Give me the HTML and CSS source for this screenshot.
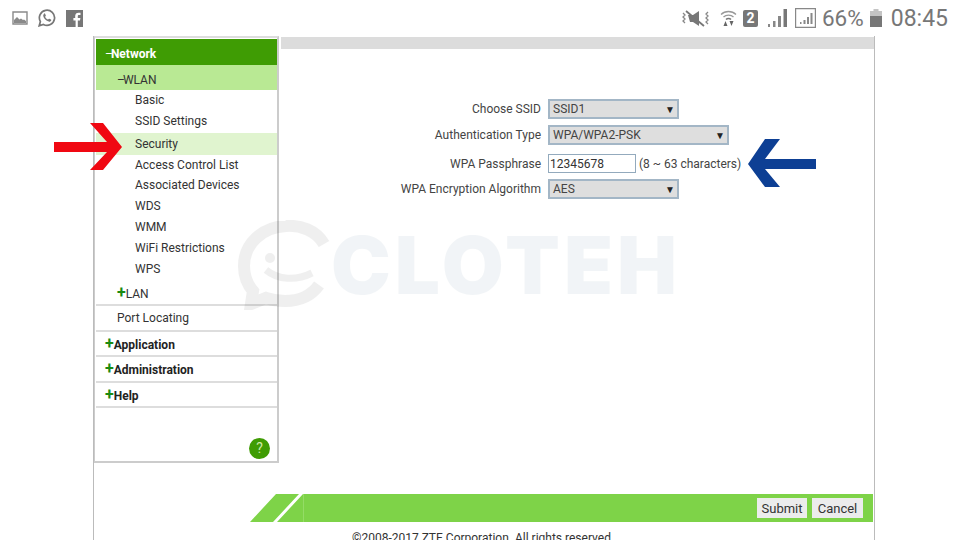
FILE: index.html
```html
<!DOCTYPE html>
<html lang="en">
<head>
    <meta charset="UTF-8">
    <title>ZTE Router - WLAN Security</title>
    <link rel="stylesheet" href="styles.css">
</head>
<body>
    <div class="status-bar">
        <div class="status-left">
            <svg class="icon-picture" width="16" height="14" viewBox="0 0 16 14"><path fill="none" stroke="#8a8a8a" stroke-width="1.4" d="M1 1h14v12H1z"/><path fill="#8a8a8a" d="M2 12V9l3-3 2.500 2.500L9 7.500l2 1.500 1-.5 2 1.500v2z"/></svg>
            <svg class="icon-whatsapp" width="18" height="18" viewBox="0 0 18 18"><path fill="none" stroke="#777" stroke-width="1.700" d="M1.200 16.800l1.200-4.200a7.600 7.600 0 1 1 3 2.900z"/><path fill="#777" d="M6.300 4.800c-.6.300-1.300 1.200-1 2.500.5 2.300 3 4.800 5.400 5.300 1.300.2 2.200-.5 2.500-1.200.1-.4 0-.7-.3-.9l-1.500-.8c-.3-.1-.5 0-.7.200l-.6.700c-1.300-.5-2.400-1.600-3-2.900l.6-.6c.2-.2.200-.4.100-.7l-.7-1.700c-.2-.4-.5-.4-.8-.3z"/></svg>
            <svg class="icon-facebook" width="17" height="17" viewBox="0 0 17 17"><path fill="#777" d="M0 0h17v17h-5.200v-6.500h2.200l.4-2.600h-2.600V6.300c0-.8.300-1.200 1.300-1.200h1.400V2.800c-.4-.1-1.200-.1-2-.1-2 0-3.300 1.200-3.300 3.400v1.800H7.400v2.600h2.200V17H0z"/></svg>
        </div>
        <div class="status-right">
            <svg class="icon-mute" width="28" height="17" viewBox="0 0 28 17"><path fill="#777" d="M6 5l5 0 6-4v15l-6-4H8z"/><path fill="none" stroke="#777" stroke-width="1.800" d="M4 1l18 15"/><path fill="none" stroke="#888" stroke-width="1.300" d="M1 3l2 2-2 2 2 2-2 2 2 2M26 2l-2 2 2 2-2 2 2 2-2 2 2 2"/></svg>
            <svg class="icon-wifi" width="17" height="18" viewBox="0 0 17 18"><g fill="none" stroke="#999" stroke-width="1.300"><path d="M1 5.500c4-4 11-4 15 0"/><path d="M3.500 8c2.500-2.500 7.500-2.500 10 0"/></g><path fill="none" stroke="#777" stroke-width="1.600" d="M6 10.500c1.300-1.200 3.700-1.200 5 0"/><path fill="#666" d="M3.500 17l2-5 2 5zM9.500 12l2 5 2-5z"/></svg>
            <span class="sim-badge">2</span>
            <svg class="icon-signal" width="19" height="18" viewBox="0 0 19 18"><path fill="#888" d="M0 15h2v3H0zM5 12h2.500v6H5zM10 7h3v11h-3z"/><path fill="#777" d="M15.500 0H19v18h-3.500z"/></svg>
            <svg class="icon-signal-box" width="21" height="20" viewBox="0 0 21 20"><path fill="none" stroke="#888" stroke-width="1.200" d="M.6.600h19.800v18.800H.6z"/><path fill="#888" d="M5 14h1.500v2H5zM8.500 12h2v4h-2zM12 9h2v7h-2zM15.500 5h2v11h-2z"/></svg>
            <span class="battery-pct">66%</span>
            <svg class="icon-battery" width="12" height="18" viewBox="0 0 12 18"><path fill="#c4c4c4" d="M3.500 0h5v2H12v5H0V2h3.500z"/><path fill="#777" d="M0 7h12v11H0z"/></svg>
            <span class="clock">08:45</span>
        </div>
    </div>

    <div class="page">
        <div class="sidebar">
            <div class="menu-title open"><span class="sign">–</span>Network</div>
            <div class="menu-sub open"><span class="sign">–</span>WLAN</div>
            <ul class="menu-items">
                <li>Basic</li>
                <li class="tall">SSID Settings</li>
                <li class="selected">Security</li>
                <li class="short">Access Control List</li>
                <li>Associated Devices</li>
                <li>WDS</li>
                <li>WMM</li>
                <li>WiFi Restrictions</li>
                <li>WPS</li>
            </ul>
            <div class="menu-sub closed"><span class="plus">+</span>LAN</div>
            <div class="menu-sub plain">Port Locating</div>
            <div class="menu-title closed"><span class="plus">+</span>Application</div>
            <div class="menu-title closed"><span class="plus">+</span>Administration</div>
            <div class="menu-title closed"><span class="plus">+</span>Help</div>
            <div class="help-wrap"><span class="help-btn">?</span></div>
        </div>

        <div class="content">
            <div class="content-head"></div>
            <div class="form">
                <div class="form-row row-ssid">
                    <label>Choose SSID</label>
                    <div class="select narrow"><span>SSID1</span><span class="caret">▼</span></div>
                </div>
                <div class="form-row row-auth">
                    <label>Authentication Type</label>
                    <div class="select wide"><span>WPA/WPA2-PSK</span><span class="caret">▼</span></div>
                </div>
                <div class="form-row row-pass">
                    <label>WPA Passphrase</label>
                    <input class="text-input" type="text" value="12345678">
                    <span class="hint">(8 ~ 63 characters)</span>
                </div>
                <div class="form-row row-algo">
                    <label>WPA Encryption Algorithm</label>
                    <div class="select narrow"><span>AES</span><span class="caret">▼</span></div>
                </div>
            </div>
        </div>

        <div class="action-bar">
            <svg class="bar-slant" width="53" height="28" viewBox="0 0 53 28"><path fill="#7ed348" d="M0 28L26 0h23L23 28zM27 28L53 0v28z"/></svg>
            <div class="bar-fill">
                <button class="btn">Submit</button>
                <button class="btn btn-cancel">Cancel</button>
            </div>
        </div>
        <div class="copyright">©2008-2017 ZTE Corporation. All rights reserved</div>
    </div>

    <!-- overlays on top of the screenshot -->
    <svg class="arrow-red" width="69" height="47" viewBox="0 0 69 47"><path fill="#f00812" d="M37 0h13l19 24-19 23H37l17-18H1V19h53z"/></svg>
    <svg class="arrow-blue" width="68" height="48" viewBox="0 0 68 48"><path fill="#0d3f94" d="M17 0h15L17 20h51v10H17l15 18H17L0 25z"/></svg>
    <div class="watermark">
        <svg width="92" height="90" viewBox="0 0 92 90"><path fill="none" stroke="#000" stroke-width="12" d="M86 24C78 10 62 5 48 6 24 7 6 24 6 46c0 10 3 18 9 25l-2 13 15-6c6 2 12 3 19 3 14 0 26-5 34-16"/><circle cx="32" cy="38" r="5"/><path fill="none" stroke="#000" stroke-width="7" d="M28 50c12 10 30 11 46 3"/></svg>
        <span class="watermark-text">CLOTEH</span>
    </div>
</body>
</html>
```

FILE: styles.css
```css
* {
    margin: 0;
    padding: 0;
    box-sizing: border-box;
}

body {
    width: 960px;
    height: 540px;
    overflow: hidden;
    position: relative;
    background: white;
    font-family: Roboto, 'Liberation Sans', sans-serif;
    font-size: 12px;
    color: #333;
}

.status-bar {
    height: 36px;
    display: flex;
    justify-content: space-between;
    align-items: center;
    padding: 0 12px;
    color: #777;
}

.status-left {
    display: flex;
    align-items: center;
    gap: 10px;
}

.status-right {
    display: flex;
    align-items: center;
}

.icon-mute {
    margin-right: 10px;
}

.icon-wifi {
    margin-right: 6px;
}

.sim-badge {
    width: 15px;
    height: 17px;
    margin-right: 10px;
    background: #777;
    border-radius: 2px;
    color: white;
    font-size: 14px;
    font-weight: 700;
    line-height: 17px;
    text-align: center;
}

.icon-signal {
    margin-right: 8px;
}

.icon-signal-box {
    margin-right: 6px;
}

.battery-pct {
    font-size: 22.500px;
    margin-right: 6px;
}

.icon-battery {
    margin-right: 9px;
}

.clock {
    font-size: 23px;
}

.page {
    position: relative;
    width: 782px;
    height: 504px;
    margin-left: 93px;
    border-left: 1px solid #bbb;
    border-right: 1px solid #bbb;
    display: flex;
    align-items: flex-start;
}

.sidebar {
    width: 185px;
    height: 427px;
    padding: 1px 0 0 1px;
    border: 1px solid #ccc;
    border-width: 0 2px 2px 1px;
    border-top: 2px solid #ddd;
    display: flex;
    flex-direction: column;
}

.menu-title {
    height: 26px;
    padding-left: 9px;
    font-weight: 700;
    line-height: 31px;
}

.menu-title.open {
    background: #3f9c04;
    color: white;
}

.menu-title.closed {
    height: 25.500px;
    border-bottom: 2px solid #ddd;
    color: #222;
    line-height: 27px;
}

.sign {
    font-weight: 400;
    letter-spacing: -2px;
}

.plus {
    color: #1a8a12;
    font-size: 16px;
    font-weight: 700;
    line-height: 1;
}

.menu-sub {
    height: 25px;
    padding-left: 21px;
    line-height: 31px;
}

.menu-sub.open {
    background: #b9e994;
}

.menu-sub.closed {
    height: 26px;
    border-bottom: 2px solid #ddd;
    line-height: 28px;
}

.menu-sub.plain {
    height: 25.500px;
    border-bottom: 2px solid #ddd;
    line-height: 25px;
}

.menu-items {
    list-style: none;
}

.menu-items li {
    height: 21px;
    padding-left: 39px;
    line-height: 21px;
}

.menu-items li.tall {
    height: 22px;
}

.menu-items li.short {
    height: 20px;
}

.menu-items li.selected {
    height: 22px;
    background: #e0f4cf;
    line-height: 22px;
}

.help-wrap {
    flex: 1;
    display: flex;
    justify-content: flex-end;
    align-items: flex-end;
    padding: 0 7px 4px 0;
}

.help-btn {
    width: 21px;
    height: 21px;
    margin-bottom: -2px;
    border-radius: 50%;
    background: #3f9c04;
    color: #cfe9a8;
    font-size: 14px;
    line-height: 21px;
    text-align: center;
}

.content {
    flex: 1;
    padding: 1px 0 0 2px;
}

.content-head {
    height: 12px;
    background: #dcdcdc;
}

.form {
    padding-top: 50px;
}

.form-row {
    display: flex;
    align-items: center;
    color: #444;
}

.form-row label {
    width: 260px;
    margin-right: 7px;
    text-align: right;
}

.row-auth {
    margin-top: 6px;
}

.row-pass {
    margin-top: 9px;
}

.row-algo {
    margin-top: 6px;
}

.select {
    height: 20px;
    padding: 0 2px 0 3px;
    display: flex;
    justify-content: space-between;
    align-items: center;
    background: #dedede;
    border: 2px solid #a3b6c6;
}

.select.narrow {
    width: 131px;
}

.select.wide {
    width: 181px;
}

.caret {
    color: #222;
    font-size: 10px;
}

.text-input {
    width: 88px;
    height: 19px;
    padding-left: 1px;
    border: 1px solid #93aabd;
    font-family: Roboto, 'Liberation Sans', sans-serif;
    font-size: 12px;
    color: #333;
}

.hint {
    margin-left: 3px;
}

.action-bar {
    position: absolute;
    left: 156px;
    top: 458px;
    width: 623px;
    height: 28px;
    display: flex;
}

.bar-slant {
    flex: none;
}

.bar-fill {
    flex: 1;
    display: flex;
    justify-content: flex-end;
    align-items: center;
    gap: 5px;
    padding-right: 10px;
    background: #7ed348;
    border-left: 1px solid #94dc66;
}

.btn {
    width: 50px;
    height: 20px;
    border: none;
    background: #ececec;
    font-family: Roboto, 'Liberation Sans', sans-serif;
    font-size: 13px;
    color: #333;
}

.btn-cancel {
    width: 51px;
}

.copyright {
    position: absolute;
    left: 258px;
    top: 495px;
    color: #333;
}

.arrow-red {
    position: absolute;
    left: 53px;
    top: 123px;
}

.arrow-blue {
    position: absolute;
    left: 748px;
    top: 139px;
}

.watermark {
    position: absolute;
    left: 238px;
    top: 216px;
    display: flex;
    align-items: center;
    gap: 1px;
    opacity: 0.06;
    pointer-events: none;
}

.watermark-text {
    font-family: Inter, sans-serif;
    font-size: 80px;
    font-weight: 900;
    color: #2a5a80;
    letter-spacing: 4px;
}
```
